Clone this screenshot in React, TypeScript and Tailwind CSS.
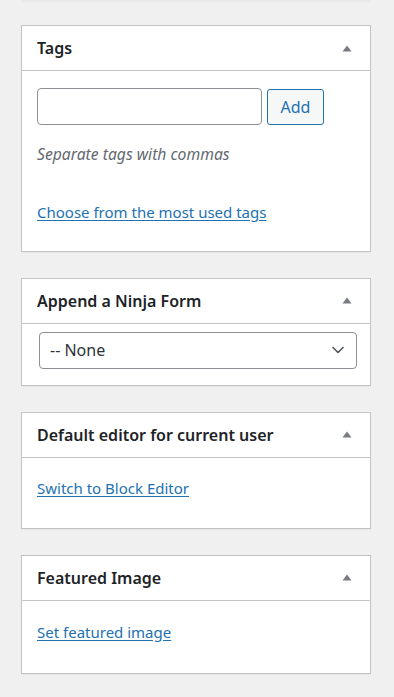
import { ChevronDown } from "lucide-react";
import type { ReactNode } from "react";

const FONT = { fontFamily: '"Noto Sans", "Open Sans", sans-serif' };

function Caret() {
  return (
    <svg width="10" height="7" viewBox="0 0 10 7" className="shrink-0">
      <path d="M5 0.5 L9.5 6.5 L0.5 6.5 Z" fill="#787c82" />
    </svg>
  );
}

function Box({ title, children }: { title: string; children: ReactNode }) {
  return (
    <section className="w-[350px] border border-[#c3c4c7] bg-white shadow-[0_1px_1px_rgba(0,0,0,0.04)]">
      <div className="flex h-[45px] items-center justify-between border-b border-[#c3c4c7] pl-[15px] pr-[18px]">
        <h2 className="text-[16px] font-semibold text-[#1d2327]">{title}</h2>
        <Caret />
      </div>
      {children}
    </section>
  );
}

function WpLink({ children }: { children: ReactNode }) {
  return (
    <a href="#" className="text-[15px] text-[#2271b1] underline underline-offset-2">
      {children}
    </a>
  );
}

export default function App() {
  return (
    <div className="min-h-[697px] bg-[#f0f0f1] pl-[21px]" style={FONT}>
      <div className="h-[2px] w-[350px] bg-[#e9e9ea]" />
      <div className="flex flex-col gap-[26px] pt-[23px]">
        <Box title="Tags">
          <div className="px-[15px] pt-[17px] pb-[27px]">
            <div className="flex items-center gap-[5px]">
              <input
                type="text"
                className="h-[37px] w-[225px] rounded-[4px] border border-[#8c8f94] bg-white px-2"
              />
              <button
                type="button"
                className="h-[36px] w-[57px] rounded-[3px] border border-[#2271b1] bg-[#f6f7f7] text-[16px] text-[#2271b1]"
              >
                Add
              </button>
            </div>
            <p className="mt-[18px] text-[15.7px] italic text-[#646970]">
              Separate tags with commas
            </p>
            <p className="mt-[33px]">
              <WpLink>Choose from the most used tags</WpLink>
            </p>
          </div>
        </Box>

        <Box title="Append a Ninja Form">
          <div className="pl-[17px] pr-[13px] pt-[8px] pb-[16px]">
            <div className="flex h-[37px] items-center justify-between rounded-[4px] border border-[#8c8f94] bg-white pl-[10px] pr-[8px]">
              <span className="text-[16px] text-[#2c3338]">-- None</span>
              <ChevronDown size={20} strokeWidth={2} className="text-[#50575e]" />
            </div>
          </div>
        </Box>

        <Box title="Default editor for current user">
          <div className="px-[15px] pt-[18px] pb-[28px]">
            <WpLink>Switch to Block Editor</WpLink>
          </div>
        </Box>

        <Box title="Featured Image">
          <div className="px-[15px] pt-[19px] pb-[29px]">
            <WpLink>Set featured image</WpLink>
          </div>
        </Box>
      </div>
    </div>
  );
}
